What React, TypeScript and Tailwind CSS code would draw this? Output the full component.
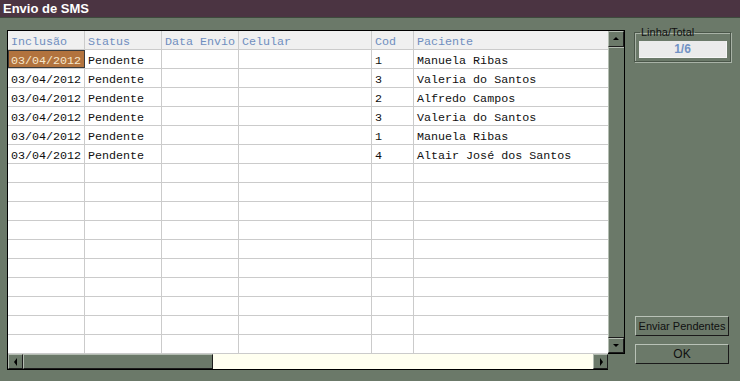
import React from 'react'

const ROWS = [
  { inc: '03/04/2012', status: 'Pendente', cod: '1', pac: 'Manuela Ribas' },
  { inc: '03/04/2012', status: 'Pendente', cod: '3', pac: 'Valeria do Santos' },
  { inc: '03/04/2012', status: 'Pendente', cod: '2', pac: 'Alfredo Campos' },
  { inc: '03/04/2012', status: 'Pendente', cod: '3', pac: 'Valeria do Santos' },
  { inc: '03/04/2012', status: 'Pendente', cod: '1', pac: 'Manuela Ribas' },
  { inc: '03/04/2012', status: 'Pendente', cod: '4', pac: 'Altair José dos Santos' },
]

const EMPTY = 16 - ROWS.length

const mono = { fontFamily: '"Liberation Mono", "Courier New", monospace' }

function Arrow({ dir }: { dir: 'up' | 'down' | 'left' | 'right' }) {
  const pts = {
    up: '1,5 4,2 7,5',
    down: '1,2 4,5 7,2',
    left: '5,0 2,4 5,8',
    right: '3,0 6,4 3,8',
  }[dir]
  return (
    <svg width="8" height="8" viewBox="0 0 8 8">
      <polygon points={pts} fill="#000" />
    </svg>
  )
}

function ScrollBtn({ dir, className }: { dir: 'up' | 'down' | 'left' | 'right'; className: string }) {
  return (
    <div
      className={`${className} flex items-center justify-center bg-[#6b7969] border-t border-l border-t-[#b4bdb2] border-l-[#b4bdb2] border-r border-b border-r-[#1c1c1c] border-b-[#1c1c1c]`}
    >
      <Arrow dir={dir} />
    </div>
  )
}

function Cell({ w, children, last, head, sel }: { w: string; children?: React.ReactNode; last?: boolean; head?: boolean; sel?: boolean }) {
  return (
    <div
      className={`${w} h-full shrink-0 flex items-center pl-[3px] pt-[6px] whitespace-nowrap overflow-hidden ${last ? '' : 'border-r border-r-[#cbcbcb]'} ${
        head ? 'text-[#6f8ebf]' : 'text-[#101010]'
      } ${sel ? 'bg-[#b2733e] text-[#f6e7cb] outline outline-1 outline-[#3a3a3a] -outline-offset-1' : ''}`}
    >
      {children}
    </div>
  )
}

function Row({ cells, head, sel }: { cells: string[]; head?: boolean; sel?: boolean }) {
  return (
    <div className={`h-[19px] flex border-b border-b-[#cbcbcb] ${head ? 'bg-[#f0f0f0]' : 'bg-white'}`}>
      <Cell w="w-[77px]" head={head} sel={sel}>{cells[0]}</Cell>
      <Cell w="w-[77px]" head={head}>{cells[1]}</Cell>
      <Cell w="w-[77px]" head={head}>{cells[2]}</Cell>
      <Cell w="w-[133px]" head={head}>{cells[3]}</Cell>
      <Cell w="w-[42px]" head={head}>{cells[4]}</Cell>
      <Cell w="flex-1" head={head} last>{cells[5]}</Cell>
    </div>
  )
}

export default function App() {
  return (
    <div
      className="w-[740px] h-[381px] bg-[#6b7969] flex flex-col overflow-hidden"
      style={{ fontFamily: '"Liberation Sans", Arial, sans-serif' }}
    >
      <div className="h-[18px] bg-[#4b3442] text-white font-bold text-[13px] leading-[18px] pl-[3px] border-b border-b-[#3e4a3d]">
        Envio de SMS
      </div>

      <div className="flex">
        {/* grid */}
        <div className="ml-[7px] mt-[12px] flex flex-col">
          <div className="flex h-[324px]">
            <div className="w-[601px] border-l border-t border-b border-[#000] text-[11.7px]" style={mono}>
              <Row head cells={['Inclusão', 'Status', 'Data Envio', 'Celular', 'Cod', 'Paciente']} />
              {ROWS.map((r, i) => (
                <Row key={i} sel={i === 0} cells={[r.inc, r.status, '', '', r.cod, r.pac]} />
              ))}
              {Array.from({ length: EMPTY }).map((_, i) => (
                <Row key={'e' + i} cells={['', '', '', '', '', '']} />
              ))}
            </div>
            <div className="w-[17px] flex flex-col border-t border-r border-b border-[#000]">
              <ScrollBtn dir="up" className="h-[16px]" />
              <div className="flex-1 bg-[#6b7969] border-t border-l border-[#b4bdb2] border-r-0 border-b border-b-[#1c1c1c]" />
              <ScrollBtn dir="down" className="h-[15px]" />
            </div>
          </div>
          <div className="flex h-[16px] w-[601px] border-l border-b border-[#000]">
            <ScrollBtn dir="left" className="w-[15px]" />
            <div className="w-[190px] bg-[#6b7969] border-t border-l border-[#b4bdb2] border-r border-r-[#1c1c1c] border-b border-b-[#1c1c1c]" />
            <div className="flex-1 bg-[#fffff0]" />
            <ScrollBtn dir="right" className="w-[15px]" />
          </div>
        </div>

        {/* right panel */}
        <div className="ml-[9px] mt-[8px] w-[97px] flex flex-col">
          <fieldset className="h-[36px] border border-[#4a5649] shadow-[inset_1px_1px_0_#a8b2a6,1px_1px_0_#a8b2a6] pl-[4px] pr-[3px]">
            <legend className="text-[11px] leading-[12px] text-[#101010] px-[1px] ml-[1px]">Linha/Total</legend>
            <div className="h-[17px] mt-[3px] bg-[#ebebeb] border-b border-r border-[#f6f6f6] text-center text-[12px] leading-[17px] font-bold text-[#7192c4]">
              1/6
            </div>
          </fieldset>
          <div className="mt-[254px] flex flex-col gap-[8px] w-[94px] ml-[1px]">
            <button className="h-[20px] bg-[#6b7969] text-[11px] text-[#101010] border border-t-[#b9c2b7] border-l-[#b9c2b7] border-r-[#1a1a1a] border-b-[#1a1a1a]">
              Enviar Pendentes
            </button>
            <button className="h-[20px] bg-[#6b7969] text-[12px] text-[#101010] border border-t-[#b9c2b7] border-l-[#b9c2b7] border-r-[#1a1a1a] border-b-[#1a1a1a]">
              OK
            </button>
          </div>
        </div>
      </div>
    </div>
  )
}
